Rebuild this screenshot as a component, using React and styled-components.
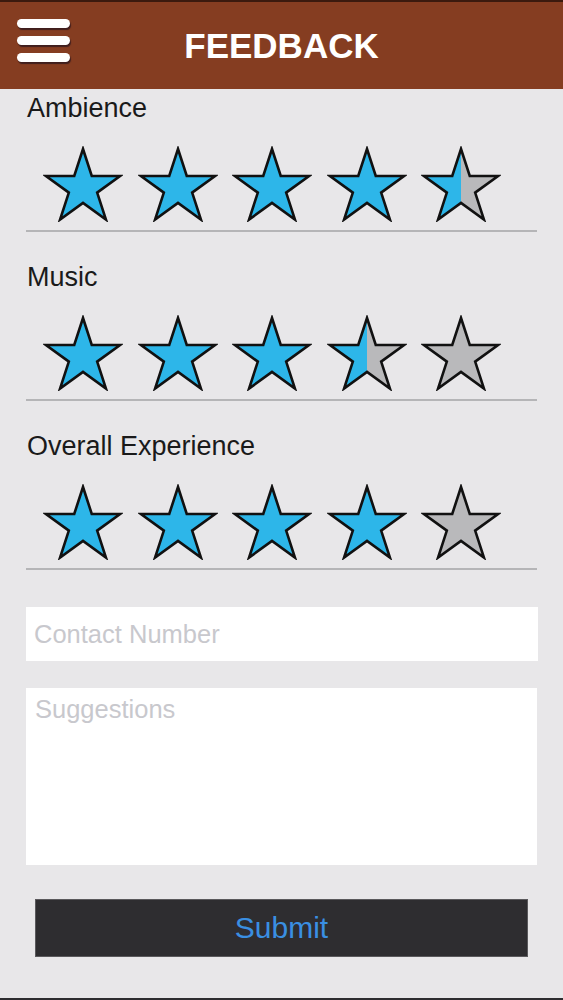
import styled, { createGlobalStyle } from "styled-components";

const GlobalStyle = createGlobalStyle`
  html, body {
    margin: 0;
    padding: 0;
  }
  body {
    font-family: "Liberation Sans", Arial, sans-serif;
    background: #e8e7e9;
  }
`;

const Screen = styled.div`
  height: 1000px;
  box-sizing: border-box;
  background: #e8e7e9;
  border-top: 2px solid #3b1a0e;
  border-bottom: 2px solid #2e2d30;
  display: flex;
  flex-direction: column;
`;

const Header = styled.header`
  height: 87px;
  background: #853d21;
  display: flex;
  align-items: center;
  justify-content: center;
  position: relative;
`;

const MenuButton = styled.div`
  position: absolute;
  left: 17px;
  top: 17px;
  display: flex;
  flex-direction: column;
  gap: 8px;
  cursor: pointer;
`;

const MenuLine = styled.span`
  display: block;
  width: 53px;
  height: 9px;
  border-radius: 5px;
  background: #ffffff;
  box-shadow: 1px 2px 1px rgba(40, 20, 30, 0.75);
`;

const Title = styled.h1`
  margin: 0;
  color: #ffffff;
  font-size: 35px;
  font-weight: bold;
  line-height: 40px;
`;

const Content = styled.main`
  padding: 4px 26px 0 26px;
  display: flex;
  flex-direction: column;
`;

const Section = styled.section`
  display: flex;
  flex-direction: column;
  margin-bottom: ${(props) => props.last ? "37px" : "30px"};
`;

const Label = styled.div`
  font-size: 27px;
  line-height: 30px;
  color: #1a1a1a;
  padding-left: 1px;
`;

const Stars = styled.div`
  display: flex;
  gap: 14.5px;
  padding-left: 17px;
  margin-top: 23px;
  margin-bottom: 8px;
`;

const Divider = styled.hr`
  margin: 0;
  border: none;
  height: 2px;
  background: #b5b5b7;
  width: 511px;
`;

const TextInput = styled.input`
  width: 512px;
  height: 54px;
  box-sizing: border-box;
  border: none;
  outline: none;
  background: #ffffff;
  padding: 0 8px;
  font-family: "Liberation Sans", Arial, sans-serif;
  font-size: 25.5px;
  color: #222;
  &::placeholder {
    color: #c8c8cd;
  }
`;

const TextArea = styled.textarea`
  width: 511px;
  height: 177px;
  box-sizing: border-box;
  margin-top: 27px;
  border: none;
  outline: none;
  resize: none;
  background: #ffffff;
  padding: 6px 9px;
  font-family: "Liberation Sans", Arial, sans-serif;
  font-size: 25.5px;
  line-height: 30px;
  color: #222;
  &::placeholder {
    color: #c8c8cd;
  }
`;

const SubmitButton = styled.button`
  margin: 34px 0 0 9px;
  width: 493px;
  height: 58px;
  background: #2e2d30;
  border: 1px solid #5a595c;
  color: #3a8fe2;
  font-family: "Liberation Sans", Arial, sans-serif;
  font-size: 30px;
  cursor: pointer;
`;

const BLUE = "#2db6e9";
const GREY = "#b9b9bb";

const starPoints = (() => {
  const cx = 40;
  const cy = 42;
  const R = 39;
  const r = R * 0.382;
  const pts = [];
  for (let i = 0; i < 10; i++) {
    const rad = i % 2 === 0 ? R : r;
    const a = (Math.PI / 5) * i - Math.PI / 2;
    pts.push(`${(cx + rad * Math.cos(a)).toFixed(2)},${(cy + rad * Math.sin(a)).toFixed(2)}`);
  }
  return pts.join(" ");
})();

const Star = ({ fill, id }) => {
  const gradId = `half-${id}`;
  return (
    <svg width="80" height="76" viewBox="0 0 80 76">
      <defs>
        <linearGradient id={gradId} x1="0" y1="0" x2="1" y2="0">
          <stop offset="0.5" stopColor={BLUE} />
          <stop offset="0.5" stopColor={GREY} />
        </linearGradient>
      </defs>
      <polygon
        points={starPoints}
        fill={fill === 1 ? BLUE : fill === 0 ? GREY : `url(#${gradId})`}
        stroke="#111"
        strokeWidth="2.6"
        strokeLinejoin="miter"
      />
    </svg>
  );
};

const Rating = ({ name, value, last }) => (
  <Section last={last}>
    <Label>{name}</Label>
    <Stars>
      {[0, 1, 2, 3, 4].map((i) => {
        const f = Math.max(0, Math.min(1, value - i));
        return <Star key={i} id={`${name}-${i}`} fill={f} />;
      })}
    </Stars>
    <Divider />
  </Section>
);

const ratings = [
  { name: "Ambience", value: 4.5 },
  { name: "Music", value: 3.5 },
  { name: "Overall Experience", value: 4 },
];

export default function App() {
  return (
    <>
      <GlobalStyle />
      <Screen>
        <Header>
          <MenuButton>
            <MenuLine />
            <MenuLine />
            <MenuLine />
          </MenuButton>
          <Title>FEEDBACK</Title>
        </Header>
        <Content>
          {ratings.map((r, i) => (
            <Rating key={r.name} {...r} last={i === ratings.length - 1} />
          ))}
          <TextInput placeholder="Contact Number" />
          <TextArea placeholder="Suggestions" />
          <SubmitButton>Submit</SubmitButton>
        </Content>
      </Screen>
    </>
  );
}
